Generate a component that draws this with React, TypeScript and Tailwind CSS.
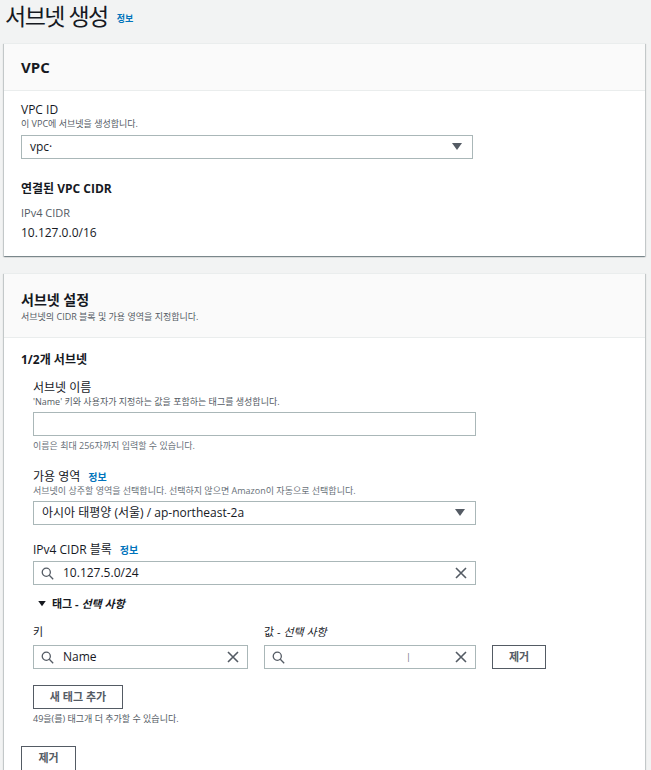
const font = { fontFamily: '"Open Sans", "Noto Sans CJK KR", sans-serif' };

function Caret() {
  return (
    <svg width="10" height="8" viewBox="0 0 10 8" className="shrink-0">
      <path d="M0 0 L10 0 L5 7 Z" fill="#545b64" />
    </svg>
  );
}

function SearchIcon() {
  return (
    <svg width="13" height="13" viewBox="0 0 16 16" fill="none" stroke="#545b64" strokeWidth="1.6" className="shrink-0">
      <circle cx="6.5" cy="6.5" r="5" />
      <path d="M10.2 10.2 L15 15" />
    </svg>
  );
}

function ClearIcon() {
  return (
    <svg width="12" height="12" viewBox="0 0 12 12" stroke="#545b64" strokeWidth="1.6" className="shrink-0">
      <path d="M1 1 L11 11 M11 1 L1 11" />
    </svg>
  );
}

function Info() {
  return <span className="ml-2 text-[10px] font-bold text-[#0073bb]">정보</span>;
}

function Select({ value, className }: { value: string; className: string }) {
  return (
    <div className={`flex items-center justify-between h-[24px] border border-[#aab7b8] bg-white pl-[8px] pr-[10px] text-[12px] text-[#16191f] ${className}`}>
      <span>{value}</span>
      <Caret />
    </div>
  );
}

function SearchInput({ value, className, cursor }: { value: string; className: string; cursor?: boolean }) {
  return (
    <div className={`flex items-center h-[24px] border border-[#aab7b8] bg-white pl-[7px] pr-[8px] text-[12px] text-[#16191f] ${className}`}>
      <SearchIcon />
      <span className="ml-[9px] flex-1">{value}</span>
      {cursor && <span className="mr-[44px] text-[9px] text-[#687078]">|</span>}
      <ClearIcon />
    </div>
  );
}

function Button({ label, className }: { label: string; className: string }) {
  return (
    <div className={`flex items-center justify-center h-[24px] border border-[#545b64] bg-white text-[11px] font-bold text-[#545b64] ${className}`}>
      {label}
    </div>
  );
}

export default function App() {
  return (
    <div style={font} className="w-[651px] h-[770px] overflow-hidden bg-[#f2f3f3] text-[#16191f]">
      <div className="flex items-end pl-[5px] pt-[2px] h-[43px]">
        <h1 className="text-[23px] tracking-[-1.5px] leading-[30px] pb-[12px]">서브넷 생성</h1>
        <span className="ml-[9px] pb-[18px] text-[9px] font-bold text-[#0073bb]">정보</span>
      </div>

      <div className="ml-[4px] w-[641px] bg-white border-t border-[#eaeded] shadow-[0_1px_1px_0_rgba(0,28,36,0.3),1px_1px_1px_0_rgba(0,28,36,0.15),-1px_1px_1px_0_rgba(0,28,36,0.15)]">
        <div className="h-[47px] bg-[#fafafa] border-b border-[#eaeded] flex items-center px-[17px]">
          <h2 className="text-[15px] font-bold">VPC</h2>
        </div>
        <div className="px-[17px] pt-[11px] pb-[15px]">
          <div className="text-[12px] leading-[16px]">VPC ID</div>
          <div className="text-[9px] leading-[12px] text-[#545b64]">이 VPC에 서브넷을 생성합니다.</div>
          <Select value="vpc·" className="mt-[5px] w-[452px]" />
          <div className="mt-[22px] text-[12px] font-bold leading-[16px]">연결된 VPC CIDR</div>
          <div className="mt-[8px] text-[11px] leading-[16px] text-[#545b64]">IPv4 CIDR</div>
          <div className="mt-[4px] text-[12px] leading-[16px]">10.127.0.0/16</div>
        </div>
      </div>

      <div className="mt-[17px] ml-[4px] w-[641px] bg-white border-t border-[#eaeded] shadow-[0_1px_1px_0_rgba(0,28,36,0.3),1px_1px_1px_0_rgba(0,28,36,0.15),-1px_1px_1px_0_rgba(0,28,36,0.15)]">
        <div className="h-[64px] bg-[#fafafa] border-b border-[#eaeded] flex flex-col justify-center px-[17px] pt-[2px]">
          <h2 className="text-[14px] font-bold leading-[20px]">서브넷 설정</h2>
          <div className="text-[9px] leading-[13px] text-[#545b64]">서브넷의 CIDR 블록 및 가용 영역을 지정합니다.</div>
        </div>
        <div className="px-[17px] pt-[14px] pb-[20px]">
          <div className="text-[12px] font-bold leading-[16px]">1/2개 서브넷</div>
          <div className="pl-[12px] pt-[12px]">
            <div className="text-[12px] leading-[16px]">서브넷 이름</div>
            <div className="text-[9px] leading-[12px] text-[#545b64]">'Name' 키와 사용자가 지정하는 값을 포함하는 태그를 생성합니다.</div>
            <div className="mt-[4px] w-[443px] h-[24px] border border-[#aab7b8] bg-white" />
            <div className="mt-[4px] text-[9px] leading-[12px] text-[#687078]">이름은 최대 256자까지 입력할 수 있습니다.</div>

            <div className="mt-[17px] flex items-center text-[12px] leading-[16px]">가용 영역<Info /></div>
            <div className="text-[9px] leading-[12px] text-[#687078]">서브넷이 상주할 영역을 선택합니다. 선택하지 않으면 Amazon이 자동으로 선택합니다.</div>
            <Select value="아시아 태평양 (서울) / ap-northeast-2a" className="mt-[4px] w-[443px]" />

            <div className="mt-[17px] flex items-center text-[12px] leading-[16px]">IPv4 CIDR 블록<Info /></div>
            <SearchInput value="10.127.5.0/24" className="mt-[3px] w-[443px]" />

            <div className="mt-[11px] ml-[5px] flex items-center text-[11px] font-bold leading-[16px] text-[#16191f]">
              <svg width="8" height="6" viewBox="0 0 10 8"><path d="M0 0 L10 0 L5 7 Z" fill="#16191f" /></svg>
              <span className="ml-[6px]">태그 - <i>선택 사항</i></span>
            </div>

            <div className="mt-[12px] flex gap-[16px] text-[11px] leading-[16px]">
              <div className="w-[215px]">키</div>
              <div><span>값 - </span><i>선택 사항</i></div>
            </div>
            <div className="mt-[5px] flex items-center">
              <SearchInput value="Name" className="w-[215px]" />
              <SearchInput value="" cursor className="ml-[16px] w-[212px]" />
              <Button label="제거" className="ml-[16px] w-[54px]" />
            </div>
            <Button label="새 태그 추가" className="mt-[16px] w-[90px]" />
            <div className="mt-[4px] text-[9px] leading-[12px] text-[#545b64]">49을(를) 태그개 더 추가할 수 있습니다.</div>
          </div>
          <Button label="제거" className="mt-[21px] w-[55px] h-[25px]" />
        </div>
      </div>
    </div>
  );
}
